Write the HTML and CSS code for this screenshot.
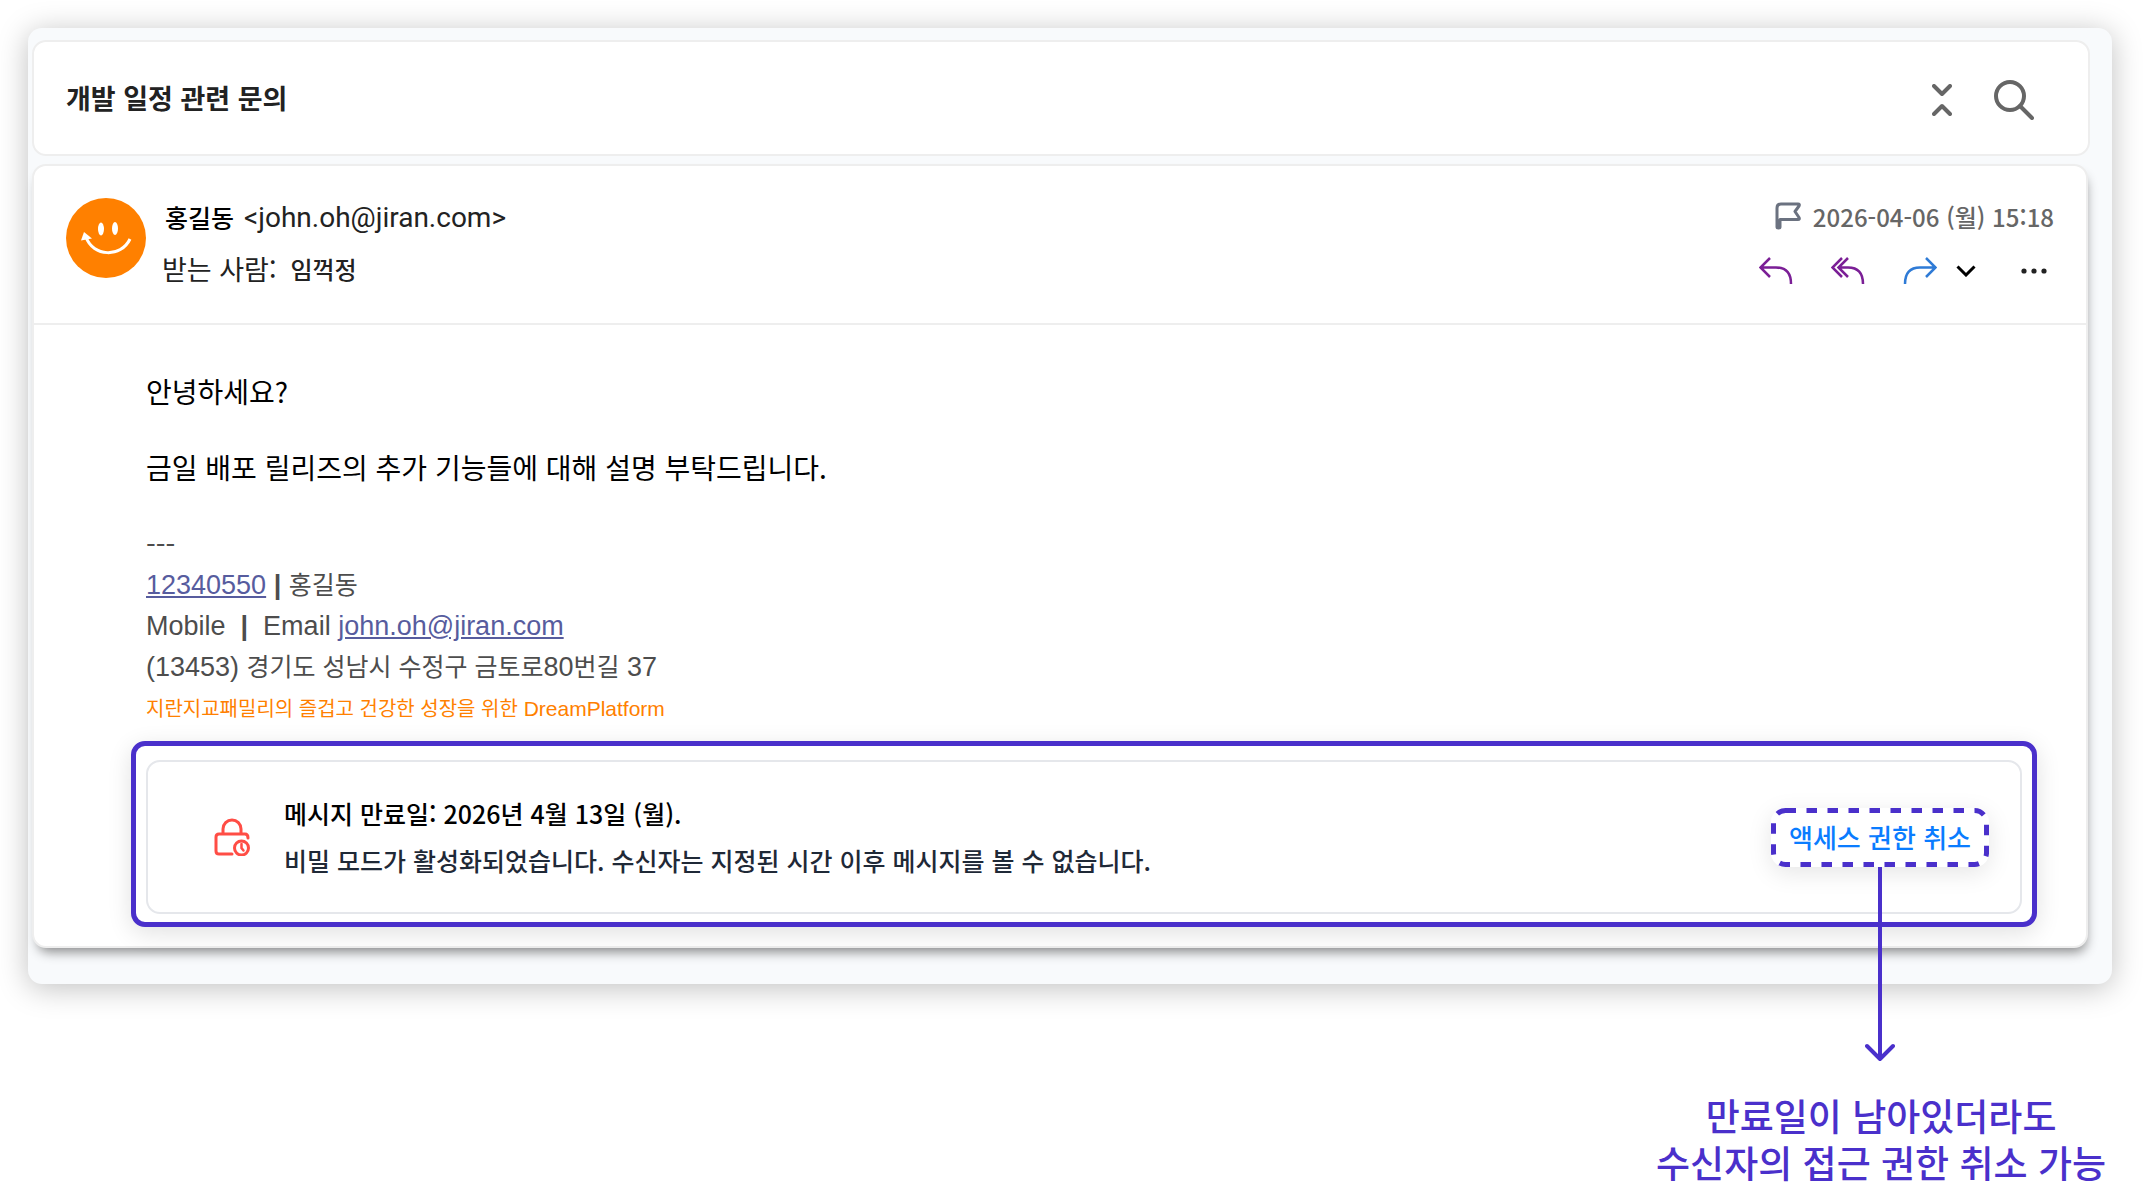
FILE: index.html
```html
<!DOCTYPE html>
<html lang="ko">
<head>
    <meta charset="UTF-8">
    <meta name="viewport" content="width=device-width, initial-scale=1">
    <title>개발 일정 관련 문의</title>
    <link rel="stylesheet" href="styles.css">
</head>
<body>
    <main class="panel">
        <header class="subject">
            <h1>개발 일정 관련 문의</h1>
            <div class="subject-tools">
                <button type="button" aria-label="접기">
                    <svg width="20" height="32" viewBox="0 0 20 32"><path d="M2 2l8 8 8-8M2 30l8-8 8 8" stroke="#666" stroke-width="4" stroke-linecap="round" stroke-linejoin="round"/></svg>
                </button>
                <button type="button" aria-label="검색">
                    <svg width="40" height="40" viewBox="0 0 40 40"><circle cx="16" cy="16" r="14" stroke="#666" stroke-width="4"/><path d="M26 26l12 12" stroke="#666" stroke-width="4" stroke-linecap="round"/></svg>
                </button>
            </div>
        </header>

        <article class="message">
            <div class="message-head">
                <svg class="avatar" width="80" height="80" viewBox="0 0 80 80">
                    <circle cx="40" cy="40" r="40" fill="#ff8000"/>
                    <ellipse cx="35" cy="31" rx="3" ry="6.5" fill="#fff"/>
                    <ellipse cx="49" cy="30.500" rx="3" ry="6.5" fill="#fff"/>
                    <path d="M20 39c7 20 35 21 44 2" stroke="#fff" stroke-width="3"/>
                    <path d="M18 34l-3 8.500 11-2z" fill="#fff"/>
                </svg>
                <div class="people">
                    <div class="from"><strong>홍길동</strong> <span>&lt;john.oh@jiran.com&gt;</span></div>
                    <div class="to">받는 사람: <span>임꺽정</span></div>
                </div>
                <div class="meta">
                    <div class="date">
                        <svg width="26" height="28" viewBox="0 0 26 28"><path d="M2 17.500V6q0-4 4-4h17q2 0 1 2l-4 5.500 4 6q1 2-1 2H5V25q0 1-1.500 1T2 25V17" stroke="#6b7280" stroke-width="3" stroke-linecap="round" stroke-linejoin="round"/></svg>
                        <time>2026-04-06 (월) 15:18</time>
                    </div>
                    <div class="actions">
                        <button type="button" aria-label="답장">
                            <svg width="34" height="28" viewBox="0 0 34 28"><path d="M11 1L1.500 10.500 11 20M2 10.500h15q15 0 15 16.500" stroke="#7b1f96" stroke-width="2.500"/></svg>
                        </button>
                        <button type="button" aria-label="전체 답장">
                            <svg width="34" height="28" viewBox="0 0 34 28"><path d="M11 1L1.500 10.500 11 20M17 1L7.500 10.500 17 20M8 10.500h9q15 0 15 16.500" stroke="#7b1f96" stroke-width="2.500"/></svg>
                        </button>
                        <button type="button" aria-label="전달">
                            <svg width="34" height="28" viewBox="0 0 34 28"><path d="M23 1l9.500 9.500L23 20M32 10.500H17q-15 0-15 16.500" stroke="#2f7bd6" stroke-width="2.500"/></svg>
                        </button>
                        <button type="button" class="more-forward" aria-label="전달 옵션">
                            <svg width="20" height="12" viewBox="0 0 20 12"><path d="M1.500 1.500L10 10l8.500-8.500" stroke="#000" stroke-width="3"/></svg>
                        </button>
                        <button type="button" class="more" aria-label="더보기">
                            <svg width="26" height="6" viewBox="0 0 26 6"><g fill="#222"><circle cx="3" cy="3" r="2.600"/><circle cx="13" cy="3" r="2.600"/><circle cx="23" cy="3" r="2.600"/></g></svg>
                        </button>
                    </div>
                </div>
            </div>

            <div class="message-body">
                <p>안녕하세요?</p>
                <p>금일 배포 릴리즈의 추가 기능들에 대해 설명 부탁드립니다.</p>
                <div class="sig-mark">---</div>
                <div class="signature">
                    <div><a href="tel:12340550">12340550</a> <b>|</b> <span class="ko">홍길동</span></div>
                    <div>Mobile &nbsp;<b>|</b>&nbsp; Email <a href="mailto:john.oh@jiran.com">john.oh@jiran.com</a></div>
                    <div>(13453) <span class="ko">경기도 성남시 수정구 금토로</span>80<span class="ko">번길</span> 37</div>
                    <div class="slogan"><span class="ko">지란지교패밀리의 즐겁고 건강한 성장을 위한</span> DreamPlatform</div>
                </div>
            </div>

            <div class="highlight">
                <section class="notice">
                    <svg class="lock" width="36" height="38" viewBox="0 0 36 38" stroke="#ff4d45" stroke-width="3" stroke-linecap="round">
                        <path d="M9 16V11a9 9 0 0 1 18 0v5M18 36H5q-3 0-3-3V19q0-3 3-3h26q3 0 3 4"/>
                        <circle cx="27.500" cy="30" r="7"/>
                        <path d="M27.500 26v4l2 2.500" stroke-width="2.500"/>
                    </svg>
                    <div class="notice-text">
                        <h2>메시지 만료일: 2026년 4월 13일 (월).</h2>
                        <p>비밀 모드가 활성화되었습니다. 수신자는 지정된 시간 이후 메시지를 볼 수 없습니다.</p>
                    </div>
                    <div class="revoke">
                        <button type="button">액세스 권한 취소</button>
                        <svg class="revoke-frame"><rect class="revoke-dash" rx="12"/></svg>
                        <svg class="revoke-arrow" width="30" height="195" viewBox="0 0 30 195"><path d="M15 0v192M2 179l13 13 13-13" stroke="#4a30cb" stroke-width="4" stroke-linecap="round" stroke-linejoin="round"/></svg>
                    </div>
                </section>
            </div>
        </article>
    </main>

    <p class="callout">만료일이 남아있더라도<br>수신자의 접근 권한 취소 가능</p>
</body>
</html>
```
FILE: styles.css
```css
* {
    box-sizing: border-box;
}

body {
    margin: 0;
    background: #fff;
    color: #222;
    font-family: "Noto Sans CJK KR", sans-serif;
    font-size: 25px;
}

h1, h2, p {
    margin: 0;
}

svg {
    display: block;
    flex: none;
    fill: none;
}

button {
    padding: 0;
    border: none;
    background: none;
    color: inherit;
    font: inherit;
    cursor: pointer;
}

.panel {
    margin: 28px 32px 0 28px;
    padding: 12px 22px 36px 4px;
    border-radius: 14px;
    background: #f8fafc;
    box-shadow: 0 4px 30px rgba(0, 0, 0, 0.25);
}

/* subject bar */
.subject {
    display: flex;
    align-items: center;
    justify-content: space-between;
    height: 116px;
    padding: 0 54px 0 32px;
    border: 2px solid #eee;
    border-radius: 14px;
    background: #fff;
}

.subject h1 {
    font-size: 27px;
    font-weight: 700;
    line-height: 38px;
}

.subject-tools {
    display: flex;
    align-items: center;
    gap: 42px;
    padding-top: 4px;
}

/* message */
.message {
    margin: 8px 2px 0 0;
    border: 2px solid #eee;
    border-radius: 14px;
    background: #fff;
    box-shadow: 2px 8px 12px -4px rgba(0, 0, 0, 0.45);
}

.message-head {
    display: flex;
    align-items: flex-start;
    height: 159px;
    padding: 32px 32px 0 32px;
    border-bottom: 2px solid #eee;
}

.people {
    flex: 1;
    margin-left: 16px;
}

.from, .to {
    display: flex;
    align-items: center;
    height: 38px;
}

.from {
    gap: 10px;
}

.from strong {
    margin-left: 3px;
    color: #000;
    font-weight: 500;
}

.from span {
    font-family: Roboto, sans-serif;
    font-size: 28px;
}

.to {
    gap: 14px;
    margin-top: 13px;
    font-size: 27px;
}

.to span {
    font-size: 24px;
    font-weight: 500;
}

.meta {
    display: flex;
    flex-direction: column;
    align-items: flex-end;
}

.date {
    display: flex;
    align-items: center;
    gap: 12px;
    height: 36px;
    color: #666;
    font-size: 24px;
    font-weight: 500;
}

.actions {
    display: flex;
    align-items: center;
    gap: 38px;
    margin: 23px 7px 0 0;
}

.more-forward {
    margin-left: -19px;
}

.more {
    margin-left: 7px;
}

.message-body {
    padding: 47px 112px 0 112px;
    color: #000;
    font-size: 28px;
    line-height: 38px;
}

.message-body p {
    margin-bottom: 38px;
}

.sig-mark {
    color: #4d4d4d;
    line-height: 41px;
}

.signature {
    color: #4d4d4d;
    font-family: "Liberation Sans", "Noto Sans CJK KR", sans-serif;
    font-size: 27px;
    line-height: 41px;
}

.signature a {
    color: #575c9e;
}

.signature .ko {
    font-size: 25px;
}

.signature .slogan {
    color: #ff8000;
    font-size: 21px;
}

.signature .slogan .ko {
    font-size: 20px;
}

/* confidential mode notice */
.highlight {
    margin: 11px 49px 19px 97px;
    padding: 14px 10px 8px 10px;
    border: 5px solid #4a30cb;
    border-radius: 14px;
    background: #fff;
    box-shadow: 0 6px 24px rgba(0, 0, 0, 0.12);
}

.notice {
    display: flex;
    align-items: center;
    height: 154px;
    padding: 0 31px 0 66px;
    border: 2px solid #e5e7eb;
    border-radius: 14px;
}

.notice-text {
    flex: 1;
    margin-left: 34px;
    line-height: 47px;
}

.notice h2 {
    color: #000;
    font-size: 25px;
    font-weight: 500;
}

.notice p {
    color: #1f2937;
    font-weight: 500;
}

.revoke {
    position: relative;
    border-radius: 14px;
    background: #fff;
    box-shadow: 0 6px 24px rgba(0, 0, 0, 0.1);
}

.revoke button {
    display: block;
    height: 59px;
    padding: 0 18px;
    color: #0a7cff;
    font-size: 26px;
    font-weight: 500;
    line-height: 38px;
}

.revoke-frame {
    position: absolute;
    top: 0;
    left: 0;
    width: 100%;
    height: 100%;
    pointer-events: none;
}

.revoke-dash {
    x: 2.5px;
    y: 2.5px;
    width: calc(100% - 5px);
    height: calc(100% - 5px);
    stroke: #4a30cb;
    stroke-width: 5;
    stroke-dasharray: 10.5 10.5;
}

.revoke-arrow {
    position: absolute;
    top: 100%;
    left: 50%;
    margin-left: -15px;
}

.callout {
    width: fit-content;
    margin: 108px 38px 0 auto;
    color: #4a30cb;
    font-size: 37px;
    font-weight: 500;
    line-height: 47px;
    text-align: center;
}
```
